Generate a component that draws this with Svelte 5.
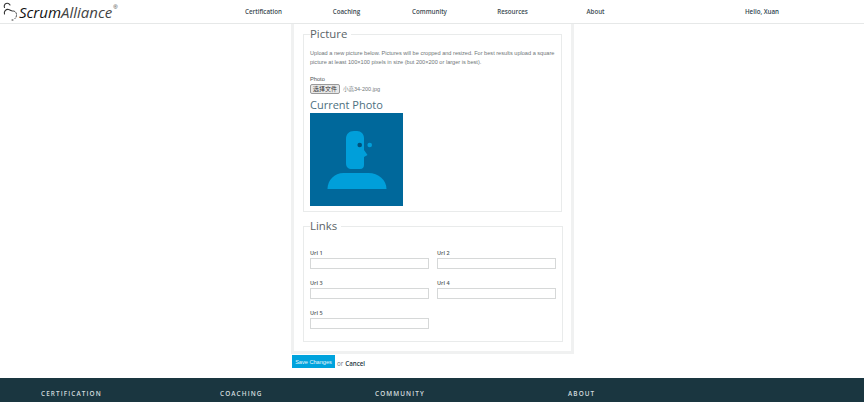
<script lang="ts">
	const navItems = ['Certification', 'Coaching', 'Community', 'Resources', 'About'];
	const urlFields = ['Url 1', 'Url 2', 'Url 3', 'Url 4', 'Url 5'];
	const footerCols = ['Certification', 'Coaching', 'Community', 'About'];
</script>

<header class="site-header">
	<a class="logo" href="#top">
		<svg class="logo-mark" viewBox="0 0 15 20" fill="none" stroke="#333" stroke-linecap="round">
			<path d="M1.500 6.500a3 3 0 0 1 5.500-2.500" stroke-width="1.100" />
			<path d="M1.500 13a3.500 3.500 0 0 1 4-4.500c1.500.3 2.500 1.500 4 1.500" stroke-width="1.100" />
			<path d="M10.500 10a3.500 3.500 0 0 1 3 3.500c0 2-.5 3-1.500 4" stroke-width="1" stroke-dasharray="1.500 1.500" />
			<path d="M9 19h1" stroke-width="1" />
		</svg>
		<span class="logo-text"><b>Scrum</b>Alliance</span><sup>®</sup>
	</a>
	<nav class="main-nav">
		{#each navItems as item}
			<a href="#top">{item}</a>
		{/each}
	</nav>
	<div class="user">Hello, Xuan</div>
</header>

<main class="page">
	<form class="panel">
		<fieldset>
			<legend>Picture</legend>
			<p class="help">
				Upload a new picture below. Pictures will be cropped and resized. For best results upload a square
				picture at least 100×100 pixels in size (but 200×200 or larger is best).
			</p>
			<div class="photo-label">Photo</div>
			<div class="file-row">
				<span class="file-btn">选择文件</span>
				<span class="file-name">小高34-200.jpg</span>
			</div>
			<h2>Current Photo</h2>
			<svg class="avatar" viewBox="0 0 93 93">
				<rect width="93" height="93" fill="#00689b" />
				<path
					fill="#009fda"
					d="M36 26c0-5 3-8 8-8h3c4 0 7 3 7 7v12l3.500 5-3.500 2v8c0 2-1 4-4 4h-8c-4 0-6-2-6-6z"
				/>
				<circle cx="49.700" cy="32" r="2.300" fill="#00527c" />
				<circle cx="59.700" cy="32" r="2.300" fill="#009fda" />
				<path fill="#009fda" d="M17.500 76c0-9 7-16 16-16h25c10 0 18 7 18 16z" />
			</svg>
		</fieldset>

		<fieldset class="links">
			<legend>Links</legend>
			<div class="url-grid">
				{#each urlFields as field}
					<label>
						<span>{field}</span>
						<input type="text" />
					</label>
				{/each}
			</div>
		</fieldset>
	</form>

	<div class="actions">
		<button type="button" class="save">Save Changes</button>
		<span class="or">or</span>
		<a href="#top" class="cancel">Cancel</a>
	</div>
</main>

<footer class="site-footer">
	{#each footerCols as col}
		<div>{col}</div>
	{/each}
</footer>

<style>
	:global(body) {
		background: #fff;
		font-family: 'Liberation Sans', Arial, sans-serif;
		overflow: hidden;
	}

	.site-header {
		display: flex;
		align-items: center;
		height: 23px;
		border-bottom: 1px solid #e6e8e8;
		box-sizing: content-box;
	}

	.logo {
		display: flex;
		align-items: flex-start;
		width: 222px;
		flex-shrink: 0;
		padding-left: 3px;
		box-sizing: border-box;
		color: #333;
		text-decoration: none;
	}

	.logo-mark {
		width: 15px;
		height: 20px;
		margin-right: 1px;
	}

	.logo-text {
		font-family: 'Open Sans', sans-serif;
		font-style: italic;
		font-size: 15px;
		line-height: 22px;
		color: #444;
	}

	.logo-text b {
		font-weight: 400;
		color: #111;
	}

	.logo sup {
		font-size: 6px;
		line-height: 12px;
		margin: 0 0 0 1px;
	}

	.main-nav {
		display: grid;
		grid-template-columns: repeat(5, 83px);
		flex-shrink: 0;
	}

	.main-nav a,
	.user {
		font-family: 'Open Sans', sans-serif;
		font-size: 6.200px;
		font-weight: 600;
		color: #3d4c52;
		text-align: center;
		text-decoration: none;
		position: relative;
		top: -0.5px;
	}

	.user {
		margin-left: 92px;
		width: 66px;
		color: #2f4650;
	}

	.page {
		height: 354px;
		padding-left: 291px;
		box-sizing: border-box;
	}

	.panel {
		width: 283px;
		height: 330px;
		padding: 3px 9px 0 9px;
		box-sizing: border-box;
		border: 3px solid #f0f1f1;
		border-top: 0;
	}

	fieldset {
		margin: 0;
		padding: 0 6px 5px;
		border: 1px solid #e9ebeb;
		height: 185px;
		box-sizing: border-box;
	}

	.links {
		margin-top: 7px;
		height: 123px;
	}

	legend {
		padding: 0 4px 0 0;
		font-family: 'Open Sans', sans-serif;
		font-size: 11.400px;
		line-height: 14px;
		color: #5b6468;
	}

	.help {
		margin: 8px 0 0;
		font-size: 5.600px;
		line-height: 9px;
		color: #6f7678;
	}

	.photo-label {
		margin-top: 8px;
		font-size: 5.700px;
		line-height: 8px;
		color: #4e5456;
	}

	.file-row {
		display: flex;
		align-items: center;
		gap: 3px;
		height: 10px;
		margin-top: 1px;
	}

	.file-btn {
		width: 30px;
		height: 10px;
		background: #e8e8e8;
		border: 1px solid #999;
		border-radius: 2px;
		box-sizing: border-box;
		font-family: 'Noto Sans CJK SC', sans-serif;
		font-size: 6px;
		line-height: 8px;
		text-align: center;
		color: #333;
	}

	.file-name {
		font-family: 'Liberation Sans', 'Noto Sans CJK SC', sans-serif;
		font-size: 5.500px;
		color: #71787a;
	}

	h2 {
		margin: 5px 0 0;
		font-family: 'Open Sans', sans-serif;
		font-size: 11px;
		font-weight: 400;
		line-height: 12px;
		color: #4d7080;
	}

	.avatar {
		display: block;
		width: 93px;
		height: 93px;
		margin-top: 2px;
	}

	.url-grid {
		display: grid;
		grid-template-columns: 119px 119px;
		column-gap: 8px;
		row-gap: 11px;
		margin-top: 17px;
	}

	label {
		display: block;
	}

	label span {
		display: block;
		font-family: 'Open Sans', sans-serif;
		font-size: 5.500px;
		font-weight: 600;
		line-height: 7px;
		color: #4f5759;
	}

	input {
		display: block;
		width: 119px;
		height: 11px;
		margin: 1px 0 0;
		padding: 0;
		box-sizing: border-box;
		border: 1px solid #d6d8d8;
		background: #fff;
	}

	.actions {
		display: flex;
		align-items: center;
		gap: 2px;
		height: 13px;
		margin: 1px 0 0 1px;
	}

	.save {
		width: 43px;
		height: 13px;
		padding: 0;
		border: 0;
		background: #00a3dd;
		color: #e8f7fc;
		font-family: 'Liberation Sans', sans-serif;
		font-size: 5.600px;
	}

	.or {
		font-family: 'Open Sans', sans-serif;
		font-size: 6.200px;
		color: #6d7577;
		position: relative;
		top: 2px;
	}

	.cancel {
		font-family: 'Open Sans', sans-serif;
		font-size: 6.200px;
		font-weight: 600;
		color: #1f3a44;
		text-decoration: none;
		position: relative;
		top: 2px;
	}

	.site-footer {
		display: grid;
		grid-template-columns: 179px 155px 193px auto;
		height: 24px;
		padding: 11px 0 0 41px;
		box-sizing: border-box;
		background: #1a3640;
		font-family: 'Open Sans', sans-serif;
		font-size: 6.400px;
		font-weight: 600;
		line-height: 9px;
		letter-spacing: 1.100px;
		text-transform: uppercase;
		color: #d3dcdf;
	}
</style>
